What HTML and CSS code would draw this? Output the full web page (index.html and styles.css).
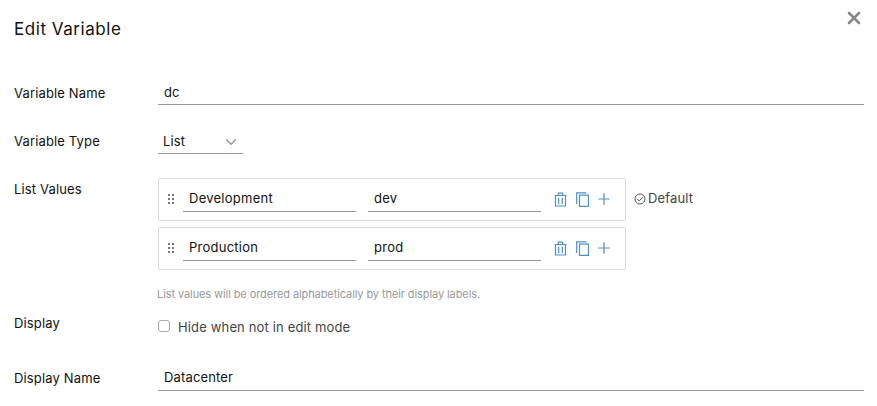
FILE: index.html
```html
<!DOCTYPE html>
<html lang="en">
<head>
<meta charset="utf-8">
<title>Edit Variable</title>
<link rel="stylesheet" href="styles.css">
</head>
<body>
<svg width="0" height="0" class="defs" aria-hidden="true">
  <symbol id="grip" viewBox="0 0 7 11"><path d="M0 1h2v2H0zM4 1h2v2H4zM0 5h2v2H0zM4 5h2v2H4zM0 9h2v2H0zM4 9h2v2H4z" fill="#777"/></symbol>
  <symbol id="trash" viewBox="0 0 13 15"><path d="M.5 3.5h12M4.3 3V1.2h4.4V3M1.5 4v10h10V4M4.7 5.7v6.5M8.3 5.7v6.5"/></symbol>
  <symbol id="copy" viewBox="0 0 13 15"><path d="M3.5 3.2h9v11.2h-9zM.7 12V.8h9.8"/></symbol>
  <symbol id="plus" viewBox="0 0 12 12"><path d="M6 .3v11.4M.3 6h11.4"/></symbol>
</svg>
<main class="dialog">
  <header class="header">
    <h1>Edit Variable</h1>
    <svg class="close" viewBox="0 0 14 14"><path d="M2 2l10 10M12 2L2 12"/></svg>
  </header>
  <div class="row name-row">
    <label>Variable Name</label>
    <div class="field">dc</div>
  </div>
  <div class="row type-row">
    <label>Variable Type</label>
    <div class="field select"><span>List</span><svg class="chevron" viewBox="0 0 12 8"><path d="M1 1.2l5 5 5-5"/></svg></div>
  </div>
  <div class="row list-row">
    <label>List Values</label>
    <div class="values">
      <div class="entry">
        <div class="card">
          <svg class="grip"><use href="#grip"/></svg>
          <div class="field">Development</div>
          <div class="field">dev</div>
          <div class="actions"><svg><use href="#trash"/></svg><svg><use href="#copy"/></svg><svg class="plus"><use href="#plus"/></svg></div>
        </div>
        <div class="default"><svg viewBox="0 0 12 12"><circle cx="6" cy="6" r="5"/><path d="M3.4 6.1l1.8 1.8 3.5-3.6"/></svg><span>Default</span></div>
      </div>
      <div class="entry">
        <div class="card">
          <svg class="grip"><use href="#grip"/></svg>
          <div class="field">Production</div>
          <div class="field">prod</div>
          <div class="actions"><svg><use href="#trash"/></svg><svg><use href="#copy"/></svg><svg class="plus"><use href="#plus"/></svg></div>
        </div>
      </div>
      <p class="hint">List values will be ordered alphabetically by their display labels.</p>
    </div>
  </div>
  <div class="row display-row">
    <label>Display</label>
    <div class="check"><i class="box"></i><span>Hide when not in edit mode</span></div>
  </div>
  <div class="row dname-row">
    <label>Display Name</label>
    <div class="field">Datacenter</div>
  </div>
</main>
</body>
</html>
```
FILE: styles.css
```css
* { box-sizing: border-box; }
body { margin: 0; background: #fff; color: #111; font: 13px/20px Inter, sans-serif; letter-spacing: .15px; }
.defs { display: block; }
svg { fill: none; flex: none; }
.dialog { width: 877px; height: 406px; padding: 0 13px 0 14px; }
.header { display: flex; justify-content: space-between; height: 71px; }
h1 { margin: 17px 0 0; font-size: 17px; line-height: 24px; font-weight: 400; letter-spacing: .55px; }
.close { width: 14px; height: 14px; margin: 11px 3px 0 0; stroke: #888; stroke-width: 2.6; stroke-linecap: round; }
.row { display: grid; grid-template-columns: 144px 1fr; align-items: start; }
.row > label { padding-top: 12px; }
.field { height: 34px; padding: 11px 0 0 6px; border-bottom: 1px solid #999; }
.name-row { height: 49px; }
.type-row { height: 58px; }
.type-row > label { padding-top: 11px; }
.select { display: flex; justify-content: space-between; width: 85px; padding-left: 5px; padding-right: 6px; }
.chevron { width: 12px; height: 8px; margin-top: 7px; stroke: #999; stroke-width: 1.4; }
.list-row { height: 133px; }
.list-row > label { padding-top: 1px; }
.entry { display: flex; height: 43px; margin-bottom: 6px; }
.card { display: flex; width: 468px; height: 43px; border: 1px solid #ddd; border-radius: 2px; padding-left: 9px; }
.grip { width: 7px; height: 11px; margin: 14px 8px 0 0; }
.card .field { width: 173px; height: 33px; margin-right: 12px; padding-top: 9px; letter-spacing: .25px; }
.actions { display: flex; align-items: center; gap: 9px; padding: 0 0 1px 1px; }
.actions svg { width: 13px; height: 15px; stroke: #4b91c8; stroke-width: 1.2; }
.actions .plus { width: 12px; height: 12px; }
.default { display: flex; align-items: center; gap: 2px; margin: -3px 0 0 8px; color: #444; }
.default svg { width: 12px; height: 12px; margin-top: 2px; stroke: #555; }
.hint { margin: 15px 0 0 -1px; font-size: 11px; line-height: 18px; letter-spacing: -.09px; color: #999; }
.display-row { height: 46px; }
.display-row > label { padding-top: 2px; }
.check { display: flex; gap: 8px; padding-top: 6px; color: #444; }
.box { width: 12px; height: 12px; margin-top: 3px; border: 1px solid #aaa; border-radius: 3px; }
.dname-row > label { padding-top: 11px; }
.dname-row .field { padding-top: 10px; }
```
